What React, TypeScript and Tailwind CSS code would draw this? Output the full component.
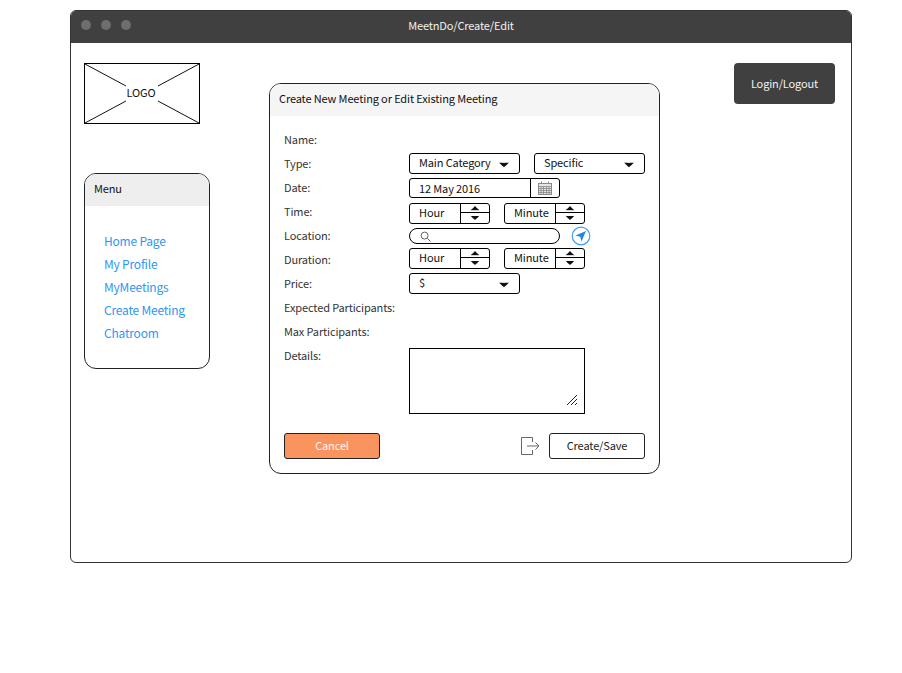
const font = "font-['Noto_Sans_CJK_SC','Source_Sans_Pro',sans-serif]";

function Caret({ up = false, className = "" }: { up?: boolean; className?: string }) {
  return (
    <svg width="12" height="6" viewBox="0 0 12 6" className={className}>
      <path d={up ? "M1 5.5 C3 4 4.5 2.5 6 0.8 C7.5 2.5 9 4 11 5.5 Z" : "M1 0.5 C3 1 9 1 11 0.5 C9 2.5 7.5 4 6 5.2 C4.5 4 3 2.5 1 0.5 Z"} fill="#111" />
    </svg>
  );
}

function Select({ label, w = "w-[111px]", className = "" }: { label: string; w?: string; className?: string }) {
  return (
    <div className={`flex h-[21px] ${w} items-center justify-between rounded-[3px] border border-black bg-white pl-[9px] pr-[9px] text-[#111] ${className}`}>
      <span className="-mt-[3px] whitespace-nowrap">{label}</span>
      <Caret className="mt-[3px]" />
    </div>
  );
}

function Spinner({ label, className = "" }: { label: string; className?: string }) {
  return (
    <div className={`flex h-[21px] w-[81px] rounded-[3px] border border-black bg-white text-[#111] ${className}`}>
      <span className="flex-1 pl-[9px] leading-[16px]">{label}</span>
      <div className="flex w-[29px] flex-col border-l border-black">
        <div className="flex h-[9px] items-center justify-center border-b border-black pb-[1px]">
          <Caret up className="scale-90" />
        </div>
        <div className="flex flex-1 items-center justify-center">
          <Caret className="scale-90" />
        </div>
      </div>
    </div>
  );
}

function Row({ label, offset = "", h = "h-6", children }: { label: string; offset?: string; h?: string; children?: React.ReactNode }) {
  return (
    <div className={`flex ${h}`}>
      <div className="w-[125px] leading-[23px] text-[#333]">{label}</div>
      <div className={`flex ${offset}`}>{children}</div>
    </div>
  );
}

function CalendarIcon() {
  return (
    <svg width="14" height="14" viewBox="0 0 14 14" fill="none" stroke="#888" strokeWidth="1">
      <rect x="0.5" y="2.5" width="13" height="11" fill="#e6e6e6" />
      <path d="M0.5 5.5H13.5M0.5 7.5H13.5M0.5 9.5H13.5M0.5 11.5H13.5M3 5.5V13.5M5.5 5.5V13.5M8.5 5.5V13.5M11 5.5V13.5" strokeWidth="0.8" />
      <path d="M3.5 0.5V3M10.5 0.5V3" />
    </svg>
  );
}

const links = ["Home Page", "My Profile", "MyMeetings", "Create Meeting", "Chatroom"];

export default function App() {
  return (
    <div className={`${font} h-[673px] w-[902px] bg-white pl-[70px] pt-[10px] text-[11px] leading-4 tracking-[-0.13px]`}>
      <div className="flex h-[553px] w-[782px] flex-col overflow-hidden rounded-[6px] border border-[#333] bg-white">
        <div className="relative flex h-[32px] shrink-0 items-center justify-center bg-[#404040] pb-[4px]">
          <div className="absolute left-[10px] top-[9px] flex gap-[10px]">
            <span className="h-[10px] w-[10px] rounded-full bg-[#6e6e6e]" />
            <span className="h-[10px] w-[10px] rounded-full bg-[#6e6e6e]" />
            <span className="h-[10px] w-[10px] rounded-full bg-[#6e6e6e]" />
          </div>
          <span className="text-[#f2f2f2]">MeetnDo/Create/Edit</span>
        </div>

        <div className="flex flex-1 pl-[13px] pt-[20px]">
          <div className="w-[126px] shrink-0">
            <div className="relative flex h-[61px] w-[116px] items-center justify-center border border-black bg-white">
              <svg className="absolute inset-0 h-full w-full" viewBox="0 0 114 59" preserveAspectRatio="none">
                <path d="M0 0L41 22M73 37L114 59M0 59L41 37M73 22L114 0" stroke="#111" strokeWidth="1" fill="none" />
              </svg>
              <span className="relative mb-[4px] mr-[2px] text-[#111]">LOGO</span>
            </div>
            <div className="mt-[49px] h-[196px] overflow-hidden rounded-[12px] border border-[#222] bg-white">
              <div className="h-[32px] bg-[#eeeeee] pl-[9px] leading-[29px] text-[#111]">Menu</div>
              <div className="flex flex-col pl-[19px] pt-[23px] text-[12px] leading-[23px] tracking-[-0.2px] text-[#2f96f3]">
                {links.map((l) => (
                  <span key={l}>{l}</span>
                ))}
              </div>
            </div>
          </div>

          <div className="ml-[59px] mt-[20px] h-[391px] w-[391px] shrink-0 overflow-hidden rounded-[12px] border border-[#222]">
            <div className="h-[32px] bg-[#f5f5f5] pl-[9px] leading-[28px] text-[#111]">Create New Meeting or Edit Existing Meeting</div>
            <div className="pl-[14px] pt-[12px]">
              <Row label="Name:" />
              <Row label="Type:" offset="mt-[1px] gap-[14px]">
                <Select label="Main Category" />
                <Select label="Specific" />
              </Row>
              <Row label="Date:" offset="mt-[2px]">
                <div className="flex h-[20px] w-[151px] rounded-[3px] border border-black text-[#111]">
                  <span className="flex-1 pl-[9px] leading-[18px]">12 May 2016</span>
                  <div className="flex w-[29px] items-center justify-center border-l border-black">
                    <CalendarIcon />
                  </div>
                </div>
              </Row>
              <Row label="Time:" offset="mt-[3px] gap-[14px]">
                <Spinner label="Hour" />
                <Spinner label="Minute" />
              </Row>
              <Row label="Location:" offset="mt-[4px]">
                <div className="flex h-[16px] w-[151px] items-center rounded-full border border-black pl-[10px]">
                  <svg width="11" height="11" viewBox="0 0 12 12" fill="none" stroke="#555" strokeWidth="1">
                    <circle cx="5" cy="5" r="3.8" />
                    <path d="M8 8L11.5 11.5" />
                  </svg>
                </div>
                <svg width="20" height="20" viewBox="0 0 20 20" className="ml-[11px] -mt-[2px]">
                  <circle cx="10" cy="10" r="8.8" fill="white" stroke="#3fa0f5" strokeWidth="1.2" />
                  <path d="M15 5L4.5 9.5L9.2 10.8L10.5 15.5Z" fill="#2187e0" />
                </svg>
              </Row>
              <Row label="Duration:" offset="gap-[14px]">
                <Spinner label="Hour" />
                <Spinner label="Minute" />
              </Row>
              <Row label="Price:" offset="mt-[1px]">
                <Select label="$" />
              </Row>
              <Row label="Expected Participants:" />
              <Row label="Max Participants:" />
              <Row label="Details:" h="h-[70px]" offset="mt-[4px]">
                <div className="relative h-[66px] w-[176px] border border-black bg-white">
                  <svg width="10" height="10" viewBox="0 0 10 10" className="absolute bottom-[8px] right-[7px]" stroke="#222" strokeWidth="1">
                    <path d="M0 10L10 0M4 10L10 4M8 10L10 8" />
                  </svg>
                </div>
              </Row>
              <div className="mt-[19px] flex items-center pr-[14px]">
                <div className="flex h-[26px] w-[96px] items-center justify-center rounded-[3px] border border-[#222] bg-[#fa945f] pb-[2px] text-[#fff3ec]">Cancel</div>
                <svg width="19" height="18" viewBox="0 0 19 18" fill="none" stroke="#666" strokeWidth="1" className="ml-auto mr-[9px]">
                  <path d="M11.5 5V0.5H0.5V17.5H11.5V13" />
                  <path d="M6 9H18M14.5 5.5L18 9L14.5 12.5" />
                </svg>
                <div className="flex h-[26px] w-[96px] items-center justify-center rounded-[3px] border border-[#222] bg-white pb-[2px] text-[#222]">Create/Save</div>
              </div>
            </div>
          </div>

          <div className="ml-[74px] flex h-[41px] w-[101px] shrink-0 items-center justify-center rounded-[4px] bg-[#404040] pb-[2px] text-[#f2f2f2]">Login/Logout</div>
        </div>
      </div>
    </div>
  );
}
